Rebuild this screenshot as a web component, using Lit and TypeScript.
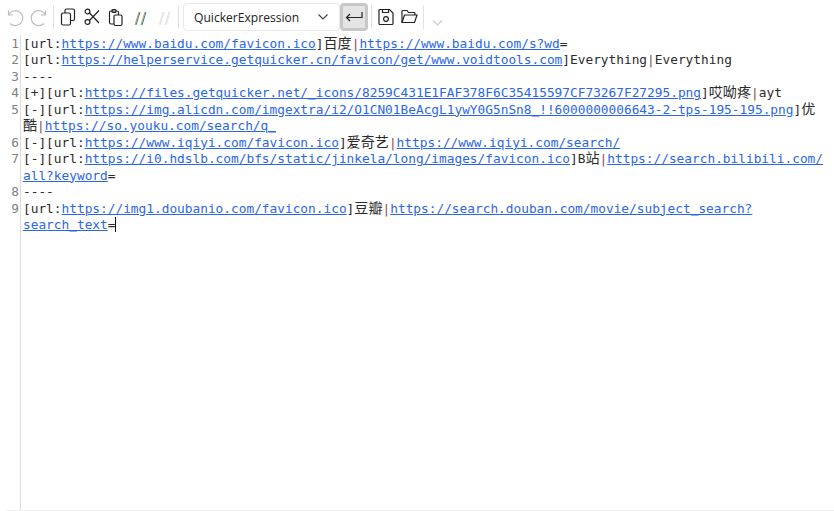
import { LitElement, html, css, svg } from "lit";
import { customElement } from "lit/decorators.js";

type Seg = { t: string } | { u: string } | { s: string } | { c: string } | { w: true };
const T = (t: string): Seg => ({ t });
const U = (u: string): Seg => ({ u });
const C = (c: string): Seg => ({ c });
const P: Seg = { s: "|" };
const W: Seg = { w: true };

const LINES: Seg[][] = [
  [T("[url:"), U("https://www.baidu.com/favicon.ico"), T("]"), C("百度"), P, U("https://www.baidu.com/s?wd"), T("=")],
  [T("[url:"), U("https://helperservice.getquicker.cn/favicon/get/www.voidtools.com"), T("]Everything"), P, T("Everything")],
  [T("----")],
  [T("[+][url:"), U("https://files.getquicker.net/_icons/8259C431E1FAF378F6C35415597CF73267F27295.png"), T("]"), C("哎呦疼"), P, T("ayt")],
  [T("[-][url:"), U("https://img.alicdn.com/imgextra/i2/O1CN01BeAcgL1ywY0G5nSn8_!!6000000006643-2-tps-195-195.png"), T("]"), C("优酷"), P, U("https://so.youku.com/search/q_")],
  [T("[-][url:"), U("https://www.iqiyi.com/favicon.ico"), T("]"), C("爱奇艺"), P, U("https://www.iqiyi.com/search/")],
  [T("[-][url:"), U("https://i0.hdslb.com/bfs/static/jinkela/long/images/favicon.ico"), T("]B"), C("站"), P, U("https://search.bilibili.com/"), W, U("all?keyword"), T("=")],
  [T("----")],
  [T("[url:"), U("https://img1.doubanio.com/favicon.ico"), T("]"), C("豆瓣"), P, U("https://search.douban.com/movie/subject_search?search_text"), T("=")],
];

const ic = (w: number, body: unknown, cls = "") => html`<svg class="ic ${cls}" width=${w} height="20" viewBox="0 0 ${w} 20" fill="none" stroke="currentColor" stroke-width="1.2">${body}</svg>`;

const seg = (s: Seg) => {
  if ("t" in s) return s.t;
  if ("u" in s) return html`<span class="url">${s.u}</span>`;
  if ("s" in s) return html`<span class="pipe">${s.s}</span>`;
  if ("c" in s) return html`<span class="cjk">${s.c}</span>`;
  return html`<wbr />`;
};

@customElement("app-root")
export class AppRoot extends LitElement {
  static styles = css`
    :host { display: block; width: 834px; height: 511px; background: #fff; overflow: hidden; font-family: "DejaVu Sans Mono", monospace; }
    .wrap { height: 511px; position: relative; }
    .toolbar { display: flex; align-items: center; height: 34px; padding-left: 6px; box-sizing: border-box; color: #222; }
    .ic { flex: none; display: block; }
    .muted { color: #bdbdbd; }
    .sep { flex: none; width: 1px; height: 24px; background: #e2e2e2; }
    .g3 { margin-left: 3px; } .g4 { margin-left: 4px; } .g5 { margin-left: 5px; } .g6 { margin-left: 6px; }
    .g7 { margin-left: 7px; } .g8 { margin-left: 8px; } .g10 { margin-left: 10px; }
    .select { flex: none; width: 157px; height: 28px; box-sizing: border-box; border: 1px solid #e8e8e8; border-radius: 4px; display: flex; align-items: center; justify-content: space-between; padding: 0 10px 0 10px; font: 12.1px "Open Sans", "Noto Sans", sans-serif; color: #222; }
    .toggle { flex: none; width: 28px; height: 28px; box-sizing: border-box; background: #e4e4e4; border: 3px solid #c8c8c8; border-radius: 4px; display: flex; align-items: center; justify-content: center; }
    .chev { margin-top: 12px; }
    .editor { height: 477px; width: 834px; box-sizing: border-box; position: relative; padding-top: 2px; }
    .rule { position: absolute; left: 20px; top: 1px; bottom: 0; width: 1px; background: #dcdcdc; }
    .row { display: grid; grid-template-columns: 19px 1fr; column-gap: 4px; font-size: 12.8px; line-height: 16.45px; color: #2b2b2b; width: 826px; }
    .num { text-align: right; color: #808080; }
    .txt { white-space: pre-wrap; min-width: 0; font-family: "DejaVu Sans Mono", "Noto Sans CJK SC", monospace; }
    .cjk { font-size: 14.1px; line-height: 0; font-family: "Noto Sans CJK SC", sans-serif; }
    .url { color: #2a66e8; text-decoration: underline; }
    .pipe { color: #8a4a4a; }
    .caret { display: inline-block; width: 1px; height: 15px; line-height: 0; background: #111; vertical-align: -3px; }
    .foot { position: absolute; left: 5px; right: 0; bottom: 0; height: 1px; background: #f0f0f0; }
  `;

  render() {
    const n = LINES.length;
    return html`<div class="wrap">
      <div class="toolbar">
        ${ic(18, svg`<path d="M2.500 3.500V8h4.500M2.500 8A7.500 7.500 0 1 1 4 16.500"/>`, "muted")}
        ${ic(18, svg`<path d="M15.500 3.500V8H11M15.500 8A7.500 7.500 0 1 0 14 16.500"/>`, "muted g6")}
        <span class="sep g5"></span>
        ${ic(16, svg`<rect x="1.500" y="6" width="9" height="12" rx="1.500"/><path d="M5 6V3.500A1.500 1.500 0 0 1 6.500 2H13a1.500 1.500 0 0 1 1.500 1.500V12A1.500 1.500 0 0 1 13 13.500h-2.500"/>`, "g6")}
        ${ic(16, svg`<circle cx="3.500" cy="4.500" r="2.400"/><circle cx="3.500" cy="15" r="2.400"/><path d="M5.500 6 15 16M5.500 13.500 15 3.500"/>`, "g8")}
        ${ic(16, svg`<rect x="1.500" y="4" width="9" height="13" rx="1.500"/><rect x="4" y="2.500" width="4" height="3" rx="1"/><rect x="6" y="8" width="8" height="10.500" rx="1.500" fill="#fff"/>`, "g8")}
        ${ic(14, svg`<path d="M5 5 1 18M11 5 7 18" stroke="#d9a520" stroke-width="1"/><path d="M6 5 2 18M12 5 8 18" stroke="#1f7fb0" stroke-width="1"/>`, "g10")}
        ${ic(14, svg`<path d="M5 5 1 18M11 5 7 18" stroke="#efe3dc" stroke-width="1"/><path d="M6 5 2 18M12 5 8 18" stroke="#d8e2ec" stroke-width="1"/>`, "g10")}
        <span class="sep g6"></span>
        <div class="select g4">
          <span>QuickerExpression</span>
          <svg width="12" height="8" viewBox="0 0 12 8" fill="none" stroke="#444" stroke-width="1.100"><path d="M1.500 1.500 6 6l4.500-4.500"/></svg>
        </div>
        <div class="toggle">
          <svg width="18" height="12" viewBox="0 0 18 12" fill="none" stroke="#222" stroke-width="1.200"><path d="M17 1v5.500H1.500M5 3 1.500 6.500 5 10"/></svg>
        </div>
        <span class="sep g3"></span>
        ${ic(16, svg`<path d="M2 2.500h9.500L15 6v10.500a1 1 0 0 1-1 1H2a1 1 0 0 1-1-1V3.500a1 1 0 0 1 1-1z"/><path d="M4.500 2.500v3h6v-3"/><circle cx="8" cy="12" r="2.400"/>`, "g6")}
        ${ic(17, svg`<path d="M1 15.500V4.500a1 1 0 0 1 1-1h4l1.500 2H13a1 1 0 0 1 1 1v1.500"/><path d="M1 15.500 3.500 8h12.500L13.500 15.500z"/>`, "g7")}
        <span class="sep g5"></span>
        <svg class="ic chev g8" width="11" height="8" viewBox="0 0 11 8" fill="none" stroke="#c8c8c8" stroke-width="1.100"><path d="M1 1.500 5.500 6 10 1.500"/></svg>
      </div>
      <div class="editor">
        <div class="rule"></div>
        ${LINES.map((segs, i) => html`<div class="row"><div class="num">${i + 1}</div><div class="txt">${segs.map(seg)}${i === n - 1 ? html`<span class="caret"></span>` : ""}</div></div>`)}
      </div>
      <div class="foot"></div>
    </div>`;
  }
}
